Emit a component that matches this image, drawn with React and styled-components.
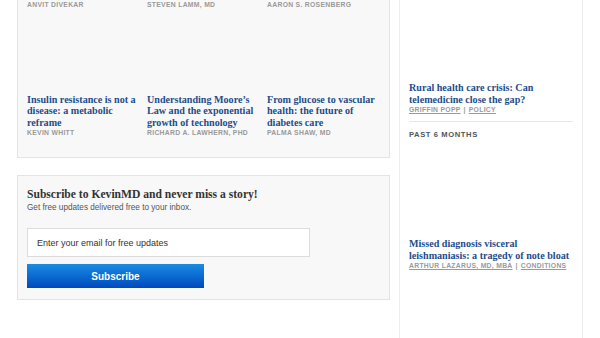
import styled, { createGlobalStyle } from 'styled-components';

const GlobalStyle = createGlobalStyle`
  html, body {
    margin: 0;
    padding: 0;
    background: #fff;
    overflow: hidden;
  }
  body {
    font-family: 'Liberation Sans', Arial, sans-serif;
  }
`;

const Page = styled.div`
  display: flex;
  align-items: flex-start;
  height: 338px;
  overflow: hidden;
  padding-left: 17px;
`;

const MainColumn = styled.div`
  width: 373px;
  display: flex;
  flex-direction: column;
  gap: 17px;
`;

const Panel = styled.section`
  box-sizing: border-box;
  background: #f8f8f8;
  border: 1px solid #e4e4e4;
  padding: ${(p) => p.$padding || '10px 9px'};
  margin-top: ${(p) => p.$offset || '0'};
`;

const CardGrid = styled.div`
  display: grid;
  grid-template-columns: repeat(3, 120px);
  row-gap: 11px;
`;

const Card = styled.article`
  display: flex;
  flex-direction: column;
  padding-right: 6px;
`;

const Thumb = styled.div`
  height: ${(p) => p.$h || 74}px;
`;

const Title = styled.a`
  display: block;
  font-family: 'Liberation Serif', 'Times New Roman', serif;
  font-weight: 700;
  font-size: 10.1px;
  line-height: 11.5px;
  color: #1e4d8c;
  text-decoration: none;
`;

const Byline = styled.div`
  font-family: 'Liberation Sans', Arial, sans-serif;
  font-weight: 700;
  font-size: 6.8px;
  line-height: 9px;
  letter-spacing: 0.3px;
  color: #9a9a9a;
  text-transform: uppercase;
`;

const SubHeading = styled.h3`
  margin: 0;
  font-family: 'Liberation Serif', 'Times New Roman', serif;
  font-weight: 700;
  font-size: 11.6px;
  line-height: 14px;
  color: #333;
`;

const SubText = styled.p`
  margin: 0 0 15px;
  font-size: 8.2px;
  line-height: 11px;
  color: #555;
`;

const EmailInput = styled.input`
  box-sizing: border-box;
  display: block;
  width: 283px;
  height: 29px;
  padding: 0 9px;
  border: 1px solid #dcdcdc;
  background: #fff;
  font-family: 'Liberation Sans', Arial, sans-serif;
  font-size: 9px;
  color: #333;
  outline: none;
  &::placeholder {
    color: #333;
  }
`;

const SubscribeButton = styled.button`
  display: block;
  margin-top: 7px;
  width: 177px;
  height: 24px;
  border: none;
  background: linear-gradient(180deg, #1b8ce0 0%, #0a6bd2 50%, #0049bd 100%);
  color: #fff;
  font-family: 'Liberation Sans', Arial, sans-serif;
  font-weight: 700;
  font-size: 10px;
  cursor: pointer;
`;

const Sidebar = styled.aside`
  box-sizing: border-box;
  width: 184px;
  height: 338px;
  margin-left: 9px;
  padding: 0 9px;
  border-left: 1px solid #ececec;
  border-right: 1px solid #ececec;
  background: #fff;
`;

const SideList = styled.div`
  margin-top: ${(p) => p.$offset || '0'};
`;

const SideMeta = styled.div`
  font-weight: 700;
  font-size: 6.8px;
  line-height: 9px;
  letter-spacing: 0.3px;
  color: #9a9a9a;
  text-transform: uppercase;

  a {
    color: inherit;
    text-decoration: underline;
  }
  span {
    margin: 0 3px;
  }
`;

const Divider = styled.hr`
  margin: 7px 0 8px;
  border: none;
  border-top: 1px solid #e6e6e6;
`;

const SectionLabel = styled.h4`
  margin: 0 0 6px;
  font-size: 7.6px;
  line-height: 10px;
  font-weight: 700;
  letter-spacing: 0.6px;
  color: #555;
  text-transform: uppercase;
`;

const cards = [
  { title: 'Why physicians must lead the next wave of care reform', author: 'Anvit Divekar' },
  { title: 'Longevity medicine and the science of aging well today', author: 'Steven Lamm, MD' },
  { title: 'When a patient story changes how a doctor practices', author: 'Aaron S. Rosenberg' },
  { title: 'Insulin resistance is not a disease: a metabolic reframe', author: 'Kevin Whitt' },
  { title: 'Understanding Moore’s Law and the exponential growth of technology', author: 'Richard A. Lawhern, PhD' },
  { title: 'From glucose to vascular health: the future of diabetes care', author: 'Palma Shaw, MD' },
];

function SideItem({ title, author, category, thumb }) {
  return (
    <div>
      <Thumb $h={thumb} />
      <Title href="#">{title}</Title>
      <SideMeta>
        <a href="#">{author}</a>
        <span>|</span>
        <a href="#">{category}</a>
      </SideMeta>
    </div>
  );
}

export default function App() {
  return (
    <>
      <GlobalStyle />
      <Page>
        <MainColumn>
          <Panel $offset="-120px" $padding="10px 9px 20px">
            <CardGrid>
              {cards.map((c) => (
                <Card key={c.author}>
                  <Thumb />
                  <Title href="#">{c.title}</Title>
                  <Byline>{c.author}</Byline>
                </Card>
              ))}
            </CardGrid>
          </Panel>

          <Panel $padding="12px 9px 11px">
            <SubHeading>Subscribe to KevinMD and never miss a story!</SubHeading>
            <SubText>Get free updates delivered free to your inbox.</SubText>
            <EmailInput type="email" placeholder="Enter your email for free updates" />
            <SubscribeButton type="button">Subscribe</SubscribeButton>
          </Panel>
        </MainColumn>

        <Sidebar>
          <SideList $offset="-10px">
            <SideItem
              thumb={92}
              title="Rural health care crisis: Can telemedicine close the gap?"
              author="Griffin Popp"
              category="Policy"
            />
            <Divider />
            <SectionLabel>Past 6 months</SectionLabel>
            <SideItem
              thumb={92}
              title="Missed diagnosis visceral leishmaniasis: a tragedy of note bloat"
              author="Arthur Lazarus, MD, MBA"
              category="Conditions"
            />
          </SideList>
        </Sidebar>
      </Page>
    </>
  );
}
